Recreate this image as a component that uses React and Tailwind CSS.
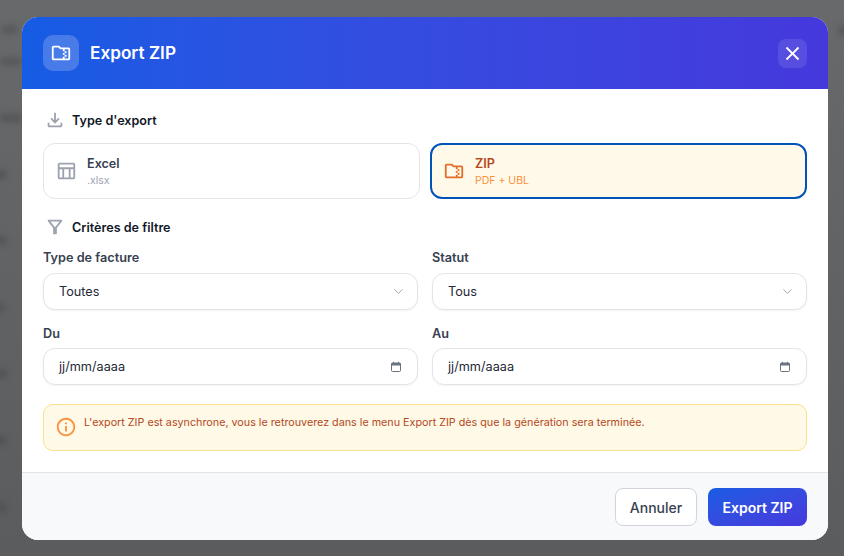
import React from "react";
import { ChevronDown } from "lucide-react";
import { MdOutlineFolderZip, MdOutlineTableChart, MdOutlineFileDownload, MdOutlineFilterAlt, MdInfoOutline, MdClose } from "react-icons/md";

function Calendar() {
  return (
    <svg width="12" height="12" viewBox="0 0 12 12" className="text-[#6b7280]" fill="none">
      <rect x="1.5" y="2" width="9" height="8.5" rx="1" stroke="currentColor" strokeWidth="1" />
      <rect x="1.5" y="2" width="9" height="2.5" fill="currentColor" />
      <rect x="3" y="0.8" width="1" height="1.6" fill="currentColor" />
      <rect x="8" y="0.8" width="1" height="1.6" fill="currentColor" />
    </svg>
  );
}

function Field({ label, value, date }) {
  return (
    <div className="flex flex-col">
      <div className={`pt-[1px] text-[12.7px] leading-4 font-semibold text-[#374151] ${date ? "mb-[6px]" : "mb-[7px]"}`}>{label}</div>
      <div className={`h-[37px] flex items-center justify-between pl-[15px] ${date ? "pr-[15px]" : "pr-[11px]"} rounded-[12px] border border-[#e2e4ea] bg-white text-[12.7px] text-[#1f2937] shadow-[0_1px_2px_rgba(0,0,0,0.05)]`}>
        <span className="pt-[1px]">{value}</span>
        {date ? <Calendar /> : <ChevronDown size={15} strokeWidth={1} className="text-[#6b7280]" />}
      </div>
    </div>
  );
}

function Section({ icon, children }) {
  return (
    <div className="flex items-center gap-[6px] h-4">
      <span className="w-[23px] flex justify-center text-[#9ca3af]">{icon}</span>
      <span className="pt-[2px] text-[12.6px] leading-4 font-semibold text-[#111827]">{children}</span>
    </div>
  );
}

const blobs = [
  "top-[26px] left-[2px] w-[16px] h-[7px]",
  "top-[58px] left-0 w-[22px] h-[7px]",
  "top-[114px] left-0 w-[22px] h-[8px]",
  "top-[170px] left-[-6px] w-[13px] h-[9px]",
  "top-[236px] left-[-6px] w-[13px] h-[9px]",
  "top-[303px] left-[-6px] w-[11px] h-[9px]",
  "top-[369px] left-[-6px] w-[13px] h-[9px]",
  "top-[436px] left-[-6px] w-[13px] h-[9px]",
  "top-[503px] left-[-6px] w-[13px] h-[9px]",
  "top-[26px] left-[838px] w-[12px] h-[9px]",
];

export default function App() {
  return (
    <div className="relative w-[844px] h-[556px] overflow-hidden bg-gradient-to-b from-[#68696b] to-[#5b5c5e] font-['Inter',sans-serif]">
      {blobs.map((b) => (
        <div key={b} className={`absolute rounded-full bg-[#4a4a4c] opacity-60 blur-[3px] ${b}`} />
      ))}
      <div className="relative ml-[22px] mt-[17px] w-[806px] h-[523px] rounded-[16px] bg-white overflow-hidden flex flex-col">
        <div className="h-[72px] shrink-0 flex items-center justify-between pl-[21px] pr-[21px] bg-gradient-to-r from-[#155ce4] to-[#4538dc]">
          <div className="flex items-center gap-[11px]">
            <div className="w-9 h-9 rounded-[10px] bg-white/20 flex items-center justify-center text-white">
              <MdOutlineFolderZip size={22} />
            </div>
            <span className="text-[17.2px] font-semibold text-white">Export ZIP</span>
          </div>
          <div className="w-[29px] h-[29px] rounded-[8px] bg-white/10 flex items-center justify-center text-white">
            <MdClose size={23} />
          </div>
        </div>

        <div className="flex-1 px-[21px] pt-[23px]">
          <Section icon={<MdOutlineFileDownload size={22} className="shrink-0" />}>Type d'export</Section>
          <div className="grid grid-cols-2 gap-[10px] mt-[15px]">
            <div className="h-[56px] rounded-[12px] border border-[#e2e4ea] flex items-center pl-[11px] gap-[10px]">
              <MdOutlineTableChart size={22} className="text-[#9ca3af]" />
              <div className="pt-[2px]">
                <div className="text-[12.6px] leading-4 font-semibold text-[#374151]">Excel</div>
                <div className="text-[10.5px] leading-4 mt-[1px] text-[#9ca3af]">.xlsx</div>
              </div>
            </div>
            <div className="h-[56px] rounded-[12px] border-2 border-[#0054b8] bg-[#fff9ea] flex items-center pl-[11px] gap-[10px]">
              <MdOutlineFolderZip size={22} className="text-[#e0702a]" />
              <div className="pt-[2px]">
                <div className="text-[12.6px] leading-4 font-semibold text-[#b4481c]">ZIP</div>
                <div className="text-[10.5px] leading-4 mt-[1px] text-[#fb923c]">PDF + UBL</div>
              </div>
            </div>
          </div>

          <div className="mt-[20px]">
            <Section icon={<MdOutlineFilterAlt size={22} className="shrink-0" />}>Critères de filtre</Section>
          </div>
          <div className="grid grid-cols-2 gap-x-[14px] gap-y-[15px] mt-[14px]">
            <Field label="Type de facture" value="Toutes" />
            <Field label="Statut" value="Tous" />
            <Field label="Du" value="jj/mm/aaaa" date />
            <Field label="Au" value="jj/mm/aaaa" date />
          </div>

          <div className="mt-[19px] h-[47px] rounded-[10px] border border-[#fde08a] bg-[#fff9e8] flex items-start pl-[11px] pt-[11px] gap-[7px]">
            <MdInfoOutline size={22} className="text-[#fb923c] shrink-0" />
            <span className="text-[10.75px] leading-[12px] mt-[1px] text-[#b4481c]">L'export ZIP est asynchrone, vous le retrouverez dans le menu Export ZIP dès que la génération sera terminée.</span>
          </div>
        </div>

        <div className="h-[68px] shrink-0 border-t border-[#e2e4ea] bg-[#f8f9fb] flex items-start justify-end gap-[11px] pr-[21px] pt-[15px]">
          <button className="h-[38px] w-[82px] rounded-[8px] border border-[#d1d5db] bg-white text-[14px] font-medium text-[#374151]">Annuler</button>
          <button className="h-[38px] w-[99px] rounded-[8px] bg-gradient-to-br from-[#155ce4] to-[#4538dc] text-[14px] font-semibold text-white">Export ZIP</button>
        </div>
      </div>
    </div>
  );
}
